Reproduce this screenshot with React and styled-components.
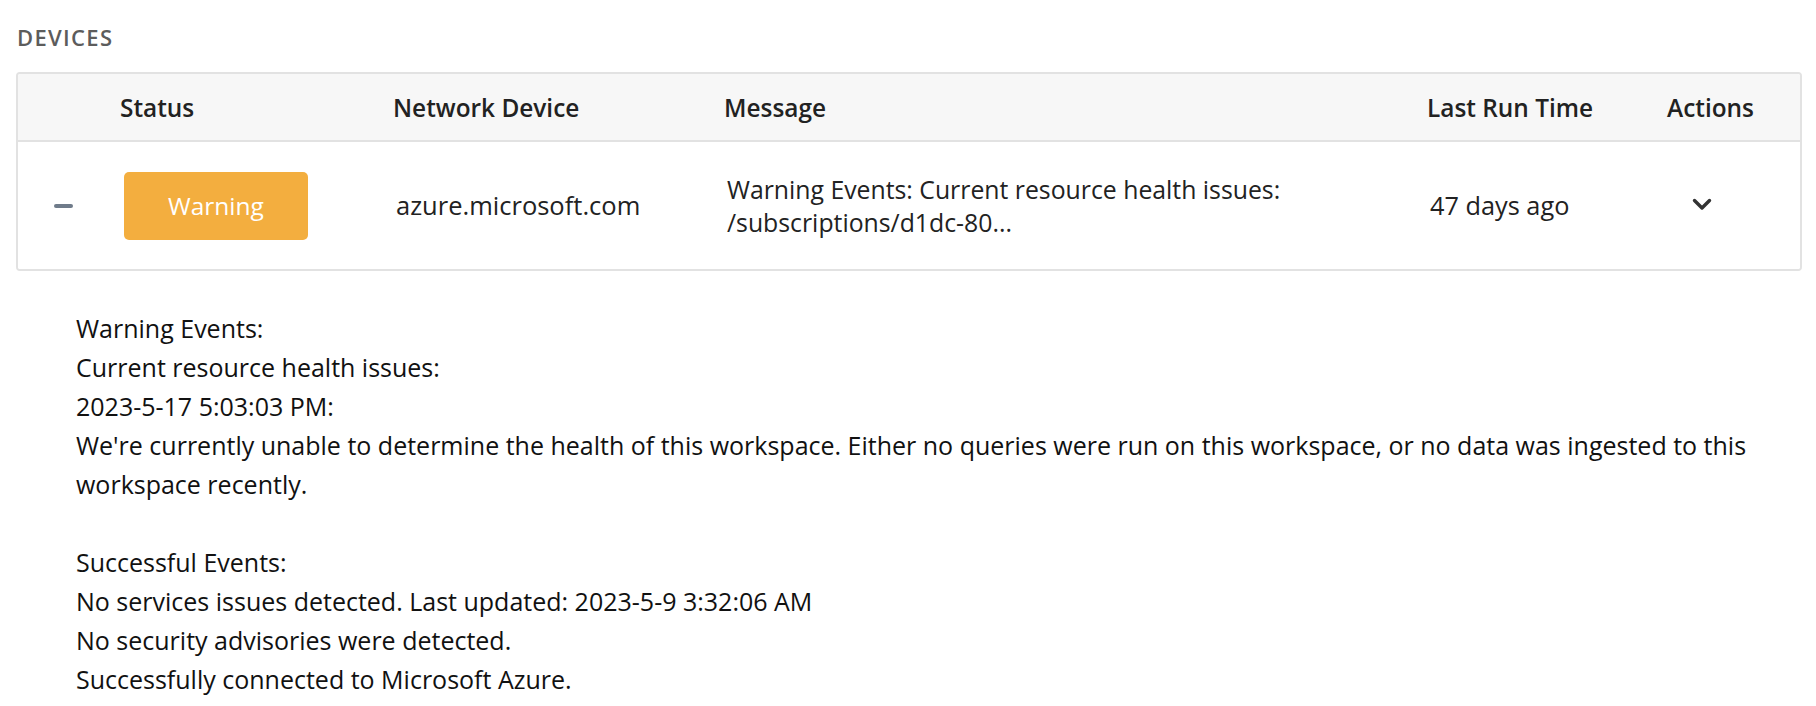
import React from 'react';
import styled, { createGlobalStyle } from 'styled-components';

const GlobalStyle = createGlobalStyle`
  body {
    margin: 0;
    background: #ffffff;
    font-family: "Open Sans", "Noto Sans", sans-serif;
    color: #1f1f1f;
  }
`

const Page = styled.div`
  padding: 22px 14px 0 16px;
`

const SectionTitle = styled.h2`
  margin: 0 0 20px 1px;
  font-size: 22px;
  line-height: 30px;
  font-weight: 600;
  letter-spacing: 0.06em;
  color: #5c5c5c;
  text-transform: uppercase;
`

const Table = styled.div`
  border: 2px solid #e2e2e2;
  border-radius: 4px;
  overflow: hidden;
`

const Row = styled.div`
  display: grid;
  grid-template-columns: 86px 273px 331px 703px 240px 1fr;
  align-items: center;
  min-height: ${p => p.$height}px;
  background: ${p => p.$head ? '#f7f7f7' : '#ffffff'};
  border-bottom: ${p => p.$head ? '2px solid #e2e2e2' : 'none'};
`

const HeadCell = styled.div`
  padding-left: 16px;
  font-size: 24.4px;
  font-weight: 600;
  color: #222222;
  white-space: nowrap;
`

const Cell = styled.div`
  padding-left: ${p => p.$pad ?? 19}px;
  font-size: ${p => p.$size ?? 24.8}px;
  line-height: 33px;
  font-weight: ${p => p.$weight ?? 400};
  color: #222222;
  white-space: nowrap;
`

const Collapse = styled.span`
  display: block;
  width: 19px;
  height: 4px;
  border-radius: 2px;
  background: #6f7b8a;
`

const Badge = styled.div`
  width: 184px;
  height: 68px;
  border-radius: 5px;
  background: #f3ae3f;
  color: #ffffff;
  font-size: 24.5px;
  display: flex;
  align-items: center;
  justify-content: center;
`

const Chevron = styled.svg`
  display: block;
  width: 20px;
  height: 13px;
  margin-top: -2px;
`

const Details = styled.div`
  padding: 38px 50px 20px 60px;
  font-size: 25px;
  line-height: 39px;
  color: #111111;
`

const Line = styled.div`
  min-height: 39px;
`

const detailLines = [
  'Warning Events:',
  'Current resource health issues:',
  '2023-5-17 5:03:03 PM:',
  "We're currently unable to determine the health of this workspace. Either no queries were run on this workspace, or no data was ingested to this workspace recently.",
  '',
  'Successful Events:',
  'No services issues detected. Last updated: 2023-5-9 3:32:06 AM',
  'No security advisories were detected.',
  'Successfully connected to Microsoft Azure.',
]

const App = () => {
  return (
    <>
      <GlobalStyle />
      <Page>
        <SectionTitle>Devices</SectionTitle>
        <Table>
          <Row $head $height={66}>
            <HeadCell />
            <HeadCell>Status</HeadCell>
            <HeadCell>Network Device</HeadCell>
            <HeadCell>Message</HeadCell>
            <HeadCell>Last Run Time</HeadCell>
            <HeadCell>Actions</HeadCell>
          </Row>
          <Row $height={127}>
            <Cell $pad={36}><Collapse /></Cell>
            <Cell $pad={20}><Badge>Warning</Badge></Cell>
            <Cell $weight={500} $size={25.5}>azure.microsoft.com</Cell>
            <Cell>
              Warning Events: Current resource health issues:<br />
              /subscriptions/d1dc-80...
            </Cell>
            <Cell $size={25.3}>47 days ago</Cell>
            <Cell $pad={41}>
              <Chevron viewBox="0 0 20 13">
                <path d="M2.5 2.5 L10 10 L17.5 2.5" fill="none" stroke="#333" strokeWidth="3.4" strokeLinecap="round" strokeLinejoin="round" />
              </Chevron>
            </Cell>
          </Row>
        </Table>
        <Details>
          {detailLines.map((l, i) => (
            <Line key={i}>{l}</Line>
          ))}
        </Details>
      </Page>
    </>
  )
}

export default App;
